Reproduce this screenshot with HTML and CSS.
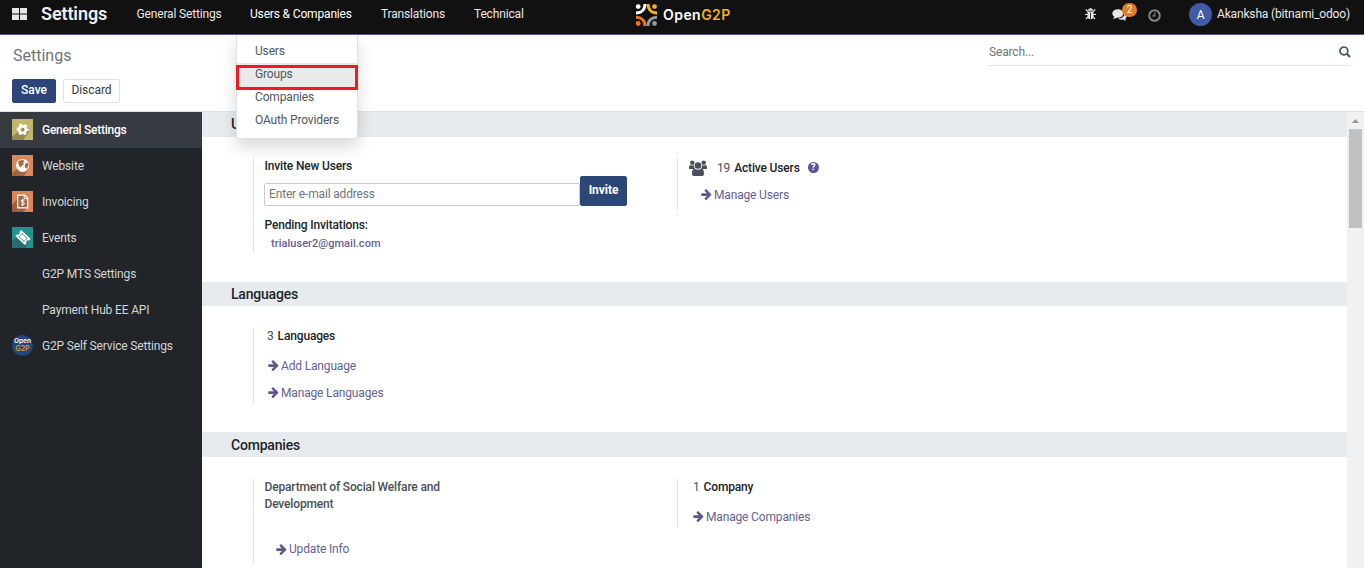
FILE: index.html
```html
<!DOCTYPE html>
<html lang="en">
<head>
<meta charset="utf-8">
<title>Settings</title>
<link rel="stylesheet" href="styles.css">
</head>
<body>
<svg width="0" height="0" class="defs">
  <symbol id="arrow" viewBox="0 150 1536 1600"><path d="M1472 960q0 54-37 91l-651 651q-39 37-91 37-51 0-90-37l-75-75q-38-38-38-91t38-91l293-293H117q-52 0-84.500-37.500T0 1024V896q0-53 32.500-90.500T117 768h704L528 474q-38-36-38-90t38-90l75-75q38-38 90-38 53 0 91 38l651 651q37 35 37 90z"/></symbol>
</svg>
<header class="navbar">
  <svg class="apps" width="15" height="12" viewBox="0 0 15 12"><path d="M0 0h7v5.500H0zM8 0h7v5.500H8zM0 6.500h7V12H0zM8 6.500h7V12H8z"/></svg>
  <div class="brand">Settings</div>
  <nav class="menu">
    <a class="m1">General Settings</a>
    <div class="m2 open"><a>Users &amp; Companies</a>
      <div class="dropdown">
        <a>Users</a><a class="active">Groups</a><a>Companies</a><a>OAuth Providers</a>
        <span class="marker"></span>
      </div>
    </div>
    <a class="m3">Translations</a>
    <a class="m4">Technical</a>
  </nav>
  <div class="logo">
    <svg width="23" height="24" viewBox="0 0 23 24" fill="none" stroke-width="3">
      <circle cx="3.200" cy="3.600" r="2.400" fill="#fff"/><path d="M1 10C6.500 10 10 6.500 10 1" stroke="#fff"/>
      <circle cx="19.500" cy="3.600" r="2.400" fill="#f5b517"/><path d="M13 1C13 6.500 16.500 10 22 10" stroke="#f5b517"/>
      <circle cx="3.200" cy="20.500" r="2.400" fill="#ee7623"/><path d="M1 14.200C6.500 14.200 10 17.500 10 23" stroke="#ee7623"/>
      <circle cx="19.500" cy="20.500" r="2.400" fill="#999"/><path d="M13 23C13 17.500 16.500 14.200 22 14.200" stroke="#999"/>
    </svg>
    <span class="logo-text">Open<b>G2P</b></span>
  </div>
  <div class="tray">
    <svg class="bug" width="11" height="12" viewBox="0 0 11 12"><path d="M3 2.800a2.500 2.500 0 0 1 5 0z" fill="#e6e6e6"/><path d="M2.500 3.400h6v4.800a3 3 0 0 1-6 0z" fill="#e6e6e6"/><path d="M.8 1.500l2.200 2.200M10.200 1.500L8 3.700M0 6.500h3M8 6.500h3M1 11l2-2.200M10 11L8 8.800" stroke="#e6e6e6" stroke-width="1.200"/><path d="M5.500 4.500V11" stroke="#111" stroke-width=".8"/></svg>
    <div class="chat">
      <svg width="15" height="12" viewBox="0 0 15 12" fill="#e6e6e6"><path d="M13.200 10q.5 1 1.300 1.500-2 .2-3.500-1-3 .6-5-.8 5.500-.1 6.500-4.600Q14.800 6 14.600 7.800 14.400 9.200 13.200 10z"/><ellipse cx="5.800" cy="4.500" rx="5.500" ry="4.200"/><path d="M2.500 7.500Q2 9.200.9 10q2.600 0 4.300-1.800z"/></svg>
      <span class="badge">2</span>
    </div>
    <svg class="clock" width="13" height="13" viewBox="0 0 13 13" fill="none" stroke="#858585"><circle cx="6.500" cy="6.500" r="5.300" stroke-width="2"/><path d="M6.800 3.500v3.400H4.300" stroke-width="1.100"/></svg>
    <span class="avatar">A</span>
    <span class="user">Akanksha (bitnami_odoo)</span>
  </div>
</header>

<section class="panel">
  <div class="panel-left">
    <div class="title">Settings</div>
    <div class="buttons"><button class="btn primary">Save</button><button class="btn">Discard</button></div>
  </div>
  <div class="search"><span>Search...</span>
    <svg width="12" height="12" viewBox="0 0 12 12" fill="none" stroke="#495057"><circle cx="4.900" cy="4.900" r="3.900" stroke-width="1.700"/><path d="M7.700 7.700L11 11" stroke-width="2"/></svg>
  </div>
</section>

<main class="body">
  <aside class="sidebar">
    <a class="tab selected"><svg width="21" height="21" viewBox="0 0 21 21"><path fill="#c1b76a" d="M0 0h21v21H0z"/><path fill="#918a51" d="M6 13L0 18v3h11l6-8-3-6z"/><circle cx="10.600" cy="10.500" r="3.400" fill="none" stroke="#fff" stroke-width="2.800"/><circle cx="10.600" cy="10.500" r="5.100" fill="none" stroke="#fff" stroke-width="1.800" stroke-dasharray="2.700 2.640" stroke-dashoffset="1.350"/></svg>General Settings</a>
    <a class="tab"><svg width="21" height="21" viewBox="0 0 21 21"><path fill="#d98a5c" d="M0 0h21v21H0z"/><path fill="#a3633f" d="M5 14L0 18v3h12l5-8z"/><circle cx="10.600" cy="10.400" r="6.500" fill="#fff"/><path fill="#ad6842" d="M6.500 6l4-1.200 2 1.300-1.500 2 1.400 1.300-2 .5-1.200 2.500-2-1.500-1-3zM13.500 8.500l2.300-1 .8 3-1.800 3.200-1.500-1-.6-2z"/></svg>Website</a>
    <a class="tab"><svg width="21" height="21" viewBox="0 0 21 21"><path fill="#d88759" d="M0 0h21v21H0z"/><path fill="#9c6041" d="M6 7L0 14v7h11l5-5-3-11z"/><path d="M5.700 4.200h7l3 3v9.600h-10z" fill="#a9694a" stroke="#fff" stroke-width="1.200"/><path d="M12.200 4.500v3.200h3.500" fill="none" stroke="#fff"/><path d="M12.400 9.300Q9 8.300 9 10q0 1 1.700 1.200t1.700 1.400Q12.400 14.400 9 13.300M10.700 8v7" fill="none" stroke="#fff" stroke-width="1"/></svg>Invoicing</a>
    <a class="tab"><svg width="21" height="21" viewBox="0 0 21 21"><path fill="#249090" d="M0 0h21v21H0z"/><path fill="#276d6f" d="M5 9L0 15v6h13l4-7z"/><g transform="rotate(43 11 10.500)"><path fill="#fff" d="M4.500 6.300h13v2.700a1.500 1.500 0 0 0 0 3v2.700h-13V12a1.500 1.500 0 0 0 0-3z"/><path d="M7.500 8.300h7v4.400h-7z" fill="none" stroke="#2d8082" stroke-width=".8"/></g></svg>Events</a>
    <a class="tab noicon">G2P MTS Settings</a>
    <a class="tab noicon">Payment Hub EE API</a>
    <a class="tab"><span class="round"><i>Open</i><b>G2P</b></span>G2P Self Service Settings</a>
  </aside>

  <div class="content">
    <section class="block first">
      <h2>Users</h2>
      <div class="cols">
        <div class="setting invite">
          <strong>Invite New Users</strong>
          <div class="field"><span class="input">Enter e-mail address</span><button class="btn primary big">Invite</button></div>
          <strong class="pending">Pending Invitations:</strong>
          <a class="mail">trialuser2@gmail.com</a>
        </div>
        <div class="setting users">
          <div class="count"><svg width="18" height="16" viewBox="0 0 18 16" fill="#495057"><circle cx="3.300" cy="2.800" r="2.200"/><circle cx="14.700" cy="2.800" r="2.200"/><path d="M0 8.500Q0 5 1.400 5q1.700 1 3.600.3Q4.700 7.500 6 9H1.300Q0 9 0 8.500zM18 8.500Q18 5 16.600 5q-1.700 1-3.600.3Q13.300 7.500 12 9h4.700Q18 9 18 8.500z"/><circle cx="9" cy="5.500" r="3.300"/><path d="M3 14Q3 8.700 5.500 8.700q3.500 2.300 7 0Q15 8.700 15 14q0 2-2 2H5q-2 0-2-2z"/></svg><span class="num">19</span><strong>Active Users</strong><span class="help">?</span></div>
          <a class="link"><svg><use href="#arrow"/></svg>Manage Users</a>
        </div>
      </div>
    </section>
    <section class="block second">
      <h2>Languages</h2>
      <div class="cols">
        <div class="setting langs">
          <div><span class="num">3</span><strong>Languages</strong></div>
          <a class="link"><svg><use href="#arrow"/></svg>Add Language</a>
          <a class="link"><svg><use href="#arrow"/></svg>Manage Languages</a>
        </div>
      </div>
    </section>
    <section class="block third">
      <h2>Companies</h2>
      <div class="cols">
        <div class="setting dept">
          <strong>Department of Social Welfare and Development</strong>
          <a class="link"><svg><use href="#arrow"/></svg>Update Info</a>
        </div>
        <div class="setting comps">
          <div><span class="num">1</span><strong>Company</strong></div>
          <a class="link"><svg><use href="#arrow"/></svg>Manage Companies</a>
        </div>
      </div>
    </section>
  </div>
  <div class="scrollbar"><svg width="7" height="4" viewBox="0 0 7 4"><path d="M0 4L3.500 0 7 4z" fill="#969696"/></svg><span class="thumb"></span></div>
</main>
</body>
</html>
```
FILE: styles.css
```css
* { box-sizing: border-box; }
body { margin: 0; width: 1365px; height: 569px; overflow: hidden; background: #fff; font: 12px/16px Roboto, sans-serif; letter-spacing: -.16px; color: #495057; display: flex; flex-direction: column; padding: 0 1px 1px 0; }
.defs { position: absolute; }
.navbar { height: 35px; flex: none; background: #111; border-bottom: 1px solid #5f5483; display: flex; align-items: flex-start; color: #e8e8e8; }
.apps { margin: 8px 14px 0 12px; fill: #e8e8e8; }
.brand { width: 95.500px; font-size: 18px; font-weight: 600; line-height: 28px; letter-spacing: -.1px; color: #eee; }
.menu { display: flex; line-height: 28px; width: 498.500px; white-space: nowrap; }
.m1 { width: 113.500px; }
.m2 { width: 131px; position: relative; height: 34px; color: #fff; }
.m3 { width: 93px; }
.dropdown { position: absolute; z-index: 5; left: -14px; top: 35px; width: 122px; height: 104px; padding-top: 5px; background: #fff; border: 1px solid #dee2e6; border-top: 0; border-radius: 0 0 3px 3px; box-shadow: 0 8px 16px rgba(0,0,0,.15); clip-path: inset(0 -30px -30px -30px); display: flex; flex-direction: column; }
.dropdown a { height: 23px; line-height: 22px; padding-left: 18px; color: #50575e; flex: none; }
.dropdown a.active { background: #eaeaea; box-shadow: 0 3px #eaeaea; }
.marker { position: absolute; left: -1px; top: 30px; width: 122px; height: 25px; border: 3px solid #ed1c24; }
.logo { display: flex; align-items: flex-start; width: 450px; padding-top: 3px; }
.logo-text { margin-left: 5px; font: 600 14px/23px Inter, sans-serif; letter-spacing: .45px; color: #fff; }
.logo-text b { font-weight: 600; color: #eeb31d; }
.tray { display: flex; }
.bug { margin-top: 8px; }
.chat { position: relative; margin: 9px 0 0 16px; width: 15px; }
.badge { position: absolute; left: 10px; top: -6px; width: 15px; height: 14px; border-radius: 7px; background: #e37b20; color: #fff; font-size: 10px; line-height: 13px; text-align: center; }
.clock { margin: 9px 0 0 21px; }
.avatar { margin: 3px 5px 0 28px; width: 23px; height: 23px; border-radius: 50%; background: #3f5ba3; color: #fff; font-size: 12px; line-height: 24px; text-align: center; }
.user { line-height: 28px; white-space: nowrap; }

.panel { height: 77px; flex: none; border-bottom: 1px solid #dee2e6; display: flex; justify-content: space-between; padding: 0 14px 0 12px; }
.title { margin: 11px 0 0 1px; font-size: 16px; line-height: 20px; letter-spacing: 0; color: #6c757d; }
.buttons { display: flex; gap: 7px; margin-top: 13px; }
.btn { height: 24px; padding: 0 0 2px; width: 57px; border: 1px solid #dee2e6; border-radius: 2px; background: #fff; color: #343a40; font: 12px/20px Roboto, sans-serif; letter-spacing: -.05px; }
.btn.primary { width: 44px; background: #2b4677; border-color: #2b4677; color: #fff; font-weight: 500; }
.btn.big { width: 47px; height: 30px; line-height: 26px; font-weight: 700; flex: none; }
.search { width: 361px; height: 31px; border-bottom: 1px solid #dee2e6; display: flex; justify-content: space-between; align-items: flex-start; padding-top: 9px; color: #6c757d; }
.search svg { margin: 2px -1px 0 0; }

.body { flex: 1; display: flex; min-height: 0; }
.sidebar { width: 202px; flex: none; background: #212529; color: #d3d5d6; }
.tab { height: 36px; display: flex; align-items: center; padding-left: 12px; gap: 9px; }
.tab svg { margin-top: -1px; }
.tab.noicon { padding-left: 42px; }
.tab.selected { background: #363a41; color: #fff; font-weight: 500; letter-spacing: -.27px; }
.round { width: 21px; height: 21px; margin-top: -1px; border-radius: 50%; background: #22477c; display: flex; flex-direction: column; align-items: center; padding-top: 2px; font: 600 6.500px/8px Inter, sans-serif; letter-spacing: 0; color: #fff; }
.round i { font-style: normal; }
.round b { color: #df9a26; font-size: 7px; font-weight: 600; }

.content { flex: 1; overflow: hidden; }
.block { height: 150px; }
.block.first { height: 170px; }
.block.third { height: 137px; }
h2 { margin: 0; height: 25px; padding-left: 29px; background: #e7ebee; font-size: 14px; line-height: 25px; font-weight: 500; letter-spacing: -.2px; color: #212529; }
.second h2 { height: 24px; }
.third h2 { line-height: 26px; }
.cols { display: flex; margin: 21px 0 0 51px; align-items: flex-start; }
.second .cols { margin-top: 22px; }
.third .cols { margin-top: 22px; }
strong { font-weight: 500; color: #212529; }
.setting { border-left: 1px solid #dee2e6; display: flex; flex-direction: column; align-items: flex-start; }
.num { margin-right: 4px; }
.link { display: flex; align-items: center; color: #665f90; gap: 2px; }
.link svg { width: 11px; height: 11px; margin-top: -1px; fill: #5e548e; }
.invite { width: 424px; height: 95px; padding-left: 10px; }
.invite strong { margin-left: .5px; }
.field { display: flex; align-items: flex-end; margin-top: 2px; }
.input { width: 316px; height: 23px; border: 1px solid #c8cbce; border-radius: 2px; padding-left: 4px; line-height: 20px; color: #757575; }
.pending { margin-top: 11px; }
.mail { margin: 3px 0 0 7px; font-size: 11px; font-weight: 500; letter-spacing: .04px; color: #665f90; }
.users { height: 52px; padding-left: 11px; }
.count { display: flex; align-items: center; height: 20px; }
.count .num { margin-left: 10px; }
.help { width: 11px; height: 11px; margin: -1px 0 0 8px; border-radius: 50%; background: #5e548e; color: #fff; font-size: 9px; line-height: 11px; font-weight: 900; letter-spacing: 0; text-align: center; }
.users .link { margin: 9px 0 0 12px; }
.langs { height: 75px; padding-left: 13px; }
.langs .link { margin: 14px 0 0 1px; }
.langs .link + .link { margin-top: 11px; }
.dept { width: 424px; height: 84px; padding-left: 10.500px; line-height: 17px; }
.dept strong { width: 190px; color: #495057; }
.dept .link { margin: 28px 0 0 11.500px; }
.comps { height: 48px; padding-left: 15px; }
.comps .link { margin-top: 14px; }

.scrollbar { width: 17px; background: #f1f1f1; display: flex; flex-direction: column; align-items: center; padding-top: 7px; }
.thumb { width: 13px; height: 99px; margin-top: 6px; background: #c1c1c1; }
```
